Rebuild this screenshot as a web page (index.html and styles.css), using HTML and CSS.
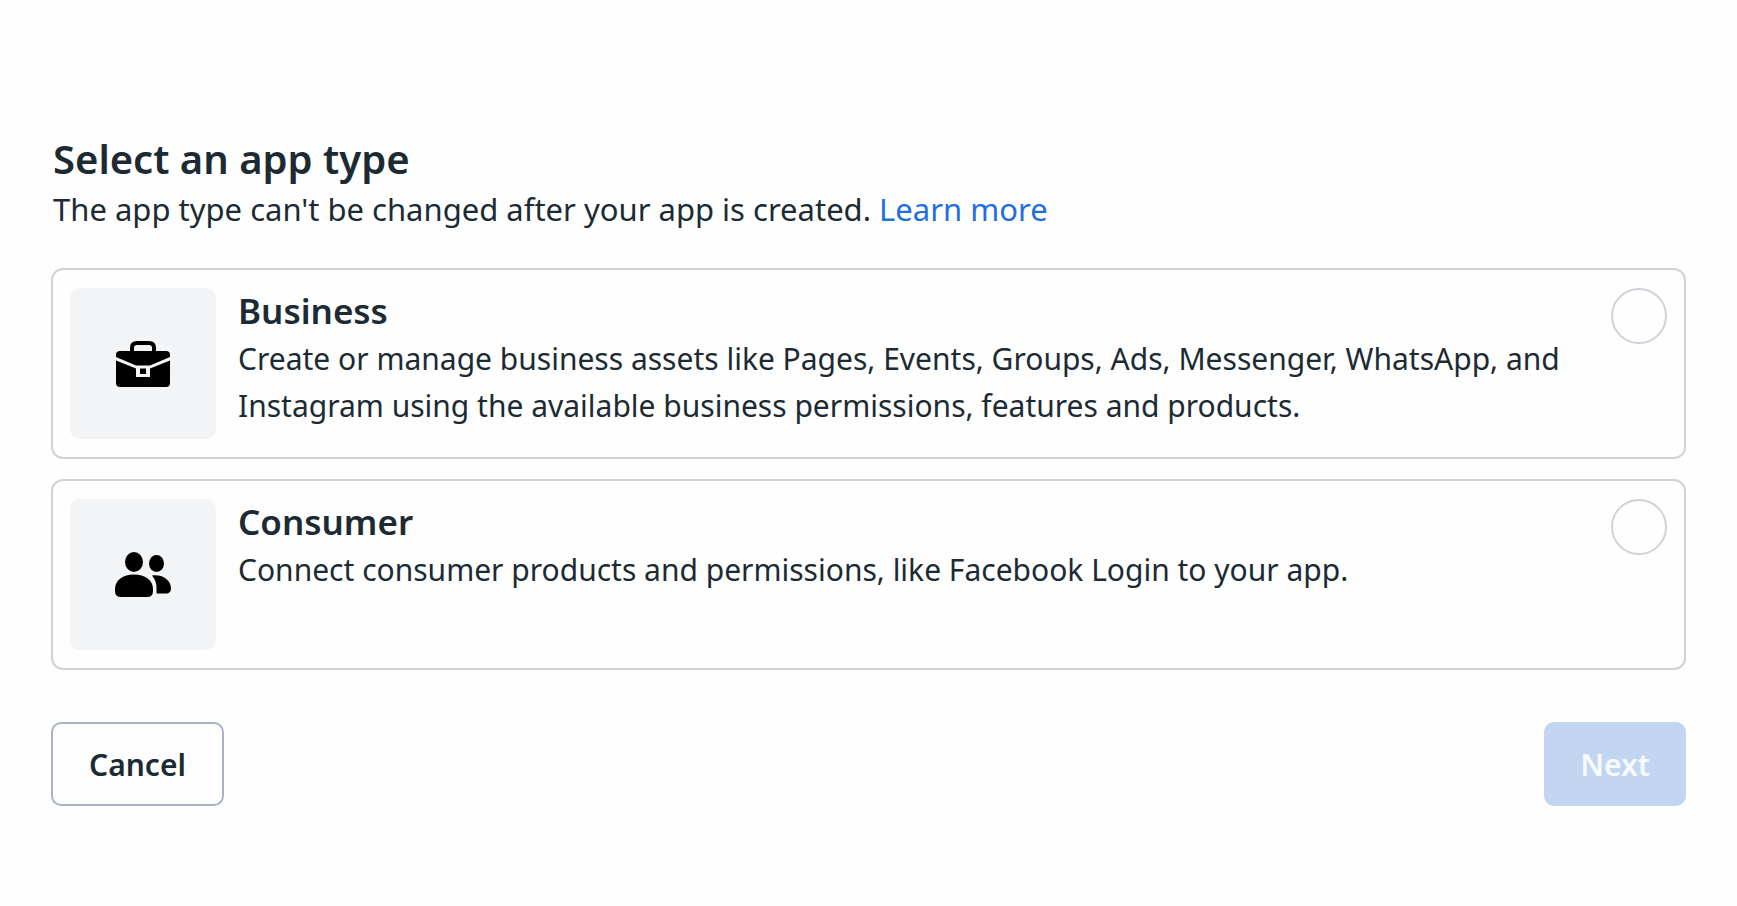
FILE: index.html
```
<!DOCTYPE html>
<html lang="en">
<head>
  <meta charset="UTF-8" />
  <meta name="viewport" content="width=device-width, initial-scale=1" />
  <title>Select an app type</title>
  <link rel="stylesheet" href="styles.css">
</head>
<body>
  <main>
    <header>
      <h1>Select an app type</h1>
      <p>The app type can't be changed after your app is created. <a href="#">Learn more</a></p>
    </header>

    <form>
      <label class="card" for="business">
        <span class="tile">
          <svg width="56" height="48" viewBox="0 0 56 48" aria-hidden="true">
            <path d="M17 12V8q0-5 5-5h12q5 0 5 5v4" fill="none" stroke="#000" stroke-width="4"/>
            <path d="M1 15q0-4 4-4h46q4 0 4 4v2L35 25.500H21L1 17z"/>
            <path d="M1 20.500l20 8V37h14v-8.500l20-8V43q0 4-4 4H5q-4 0-4-4z"/>
            <path d="M25 28.500h6V34h-6z"/>
          </svg>
        </span>
        <span class="info">
          <span class="name">Business</span>
          <span class="desc">Create or manage business assets like Pages, Events, Groups, Ads, Messenger, WhatsApp, and Instagram using the available business permissions, features and products.</span>
        </span>
        <input type="radio" name="apptype" id="business">
      </label>

      <label class="card" for="consumer">
        <span class="tile">
          <svg width="56" height="48" viewBox="0 1 56 48" aria-hidden="true">
            <ellipse cx="19" cy="12" rx="9" ry="10"/>
            <ellipse cx="41.500" cy="13.500" rx="7.500" ry="8.500"/>
            <path d="M0 39C0 30 8 24.500 19 24.500S38 30 38 39v2q0 6-6 6H6q-6 0-6-6z"/>
            <path d="M37 25.500c11-1.500 19 5 19 13 0 3.500-2 5-5 5H41.500V38c0-5-1.500-9-4.500-12.500z"/>
          </svg>
        </span>
        <span class="info">
          <span class="name">Consumer</span>
          <span class="desc">Connect consumer products and permissions, like Facebook Login to your app.</span>
        </span>
        <input type="radio" name="apptype" id="consumer">
      </label>

      <div class="actions">
        <button type="button" class="cancel">Cancel</button>
        <button type="submit" class="next" disabled>Next</button>
      </div>
    </form>
  </main>
</body>
</html>
```

FILE: styles.css
```
* {
  box-sizing: border-box;
}
body {
  font-family: "Noto Sans", sans-serif;
  background: #fefefe;
  color: #1c2b33;
  margin: 0;
}
main {
  padding: 135px 51px 96px;
}
header {
  padding: 0 2px;
  margin-bottom: 35px;
}
h1 {
  margin: 0 0 3px;
  font-size: 40px;
  line-height: 48px;
  font-weight: 600;
}
header p {
  margin: 0;
  font-size: 31px;
  line-height: 47px;
}
a {
  color: #216fdb;
  text-decoration: none;
}
.card {
  display: flex;
  align-items: flex-start;
  gap: 22px;
  padding: 18px 17px;
  margin-bottom: 20px;
  border: 2px solid #ced3da;
  border-radius: 12px;
  cursor: pointer;
}
.tile {
  display: flex;
  flex: none;
  align-items: center;
  justify-content: center;
  width: 146px;
  height: 151px;
  border-radius: 10px;
  background: #f2f4f6;
}
.info {
  flex: 1;
}
.name {
  display: block;
  margin-bottom: 1px;
  font-size: 35px;
  line-height: 46px;
  font-weight: 600;
}
.desc {
  display: block;
  font-size: 30px;
  line-height: 47px;
}
input[type="radio"] {
  appearance: none;
  flex: none;
  width: 56px;
  height: 56px;
  margin: 0;
  border: 2px solid #ced3da;
  border-radius: 50%;
  cursor: pointer;
}
input[type="radio"]:checked {
  border: 16px solid #216fdb;
}
.actions {
  display: flex;
  justify-content: space-between;
  padding-top: 32px;
}
button {
  height: 84px;
  padding: 0 36px;
  border-radius: 10px;
  font-family: inherit;
  font-size: 30px;
  font-weight: 600;
}
.cancel {
  border: 2px solid #a9b4c2;
  background: #fefefe;
  color: #1c2b33;
  cursor: pointer;
}
.next {
  border: none;
  background: #c2d6f1;
  color: #f7faff;
}
```
